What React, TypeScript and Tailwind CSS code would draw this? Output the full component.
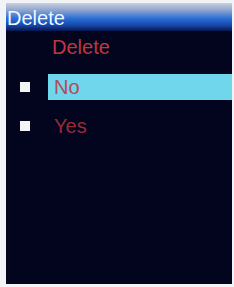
export default function App() {
  const items = [
    { label: "No", active: true },
    { label: "Yes", active: false },
  ];

  return (
    <div
      className="flex h-[287px] w-[234px] bg-[#f2f3f7] pl-[6px] pt-[3px] pb-[3px] pr-[2px]"
      style={{ fontFamily: '"Liberation Sans", Arial, sans-serif' }}
    >
      <div className="flex flex-1 flex-col bg-[#03041d]">
        <div className="flex h-[28px] items-center bg-[linear-gradient(to_bottom,#c9cfdd_0%,#8fa6cf_25%,#2c6fd6_55%,#1546a8_80%,#07164a_100%)] px-[1px] pt-[1px] text-[20px] leading-[24px] text-[#eef6ff]">
          Delete
        </div>
        <div className="pl-[46px] pt-[4px] text-[20px] leading-[24px] text-[#c4363e]">
          Delete
        </div>
        <div className="mt-[15px] flex flex-col gap-[13px]">
          {items.map((it) => (
            <div key={it.label} className="flex h-[26px] items-center">
              <div className="ml-[14px] mr-[18px] h-[10px] w-[10px] bg-[#f4f4f6]" />
              <div
                className={
                  it.active
                    ? "flex h-full flex-1 items-center bg-[#70d6ec] pl-[6px] text-[20px] text-[#b4495a]"
                    : "flex h-full flex-1 items-center pl-[6px] text-[20px] text-[#9a2a36]"
                }
              >
                {it.label}
              </div>
            </div>
          ))}
        </div>
      </div>
    </div>
  );
}
